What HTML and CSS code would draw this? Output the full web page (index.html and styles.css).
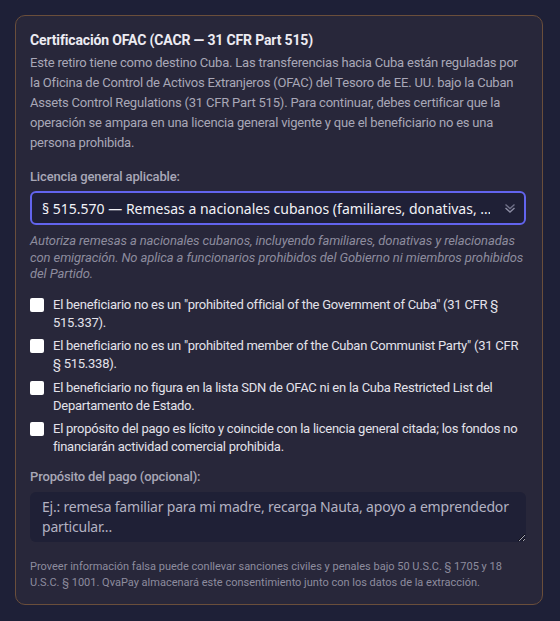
FILE: index.html
```html
<!DOCTYPE html>
<html lang="es">
<head>
    <meta charset="UTF-8">
    <meta name="viewport" content="width=device-width, initial-scale=1.0">
    <title>Certificación OFAC</title>
    <link rel="stylesheet" href="styles.css">
</head>
<body>
    <section class="ofac-card">
        <h2 class="ofac-title">Certificación OFAC (CACR — 31 CFR Part 515)</h2>
        <p class="ofac-intro">Este retiro tiene como destino Cuba. Las transferencias hacia Cuba están reguladas por la Oficina de Control de Activos Extranjeros (OFAC) del Tesoro de EE. UU. bajo la Cuban Assets Control Regulations (31 CFR Part 515). Para continuar, debes certificar que la operación se ampara en una licencia general vigente y que el beneficiario no es una persona prohibida.</p>

        <div class="field">
            <label class="field-label" for="license">Licencia general aplicable:</label>
            <div class="select-wrap">
                <select id="license" class="license-select">
                    <option>§ 515.570 — Remesas a nacionales cubanos (familiares, donativas, …</option>
                </select>
                <svg class="select-chevron" width="12" height="11" viewBox="0 0 12 11" fill="none">
                    <polyline points="1.5,1.5 6,5.5 10.5,1.5" stroke="#6f7088" stroke-width="1.4"/>
                    <polyline points="1.5,5 6,9 10.5,5" stroke="#8a8ba2" stroke-width="1.4"/>
                </svg>
            </div>
            <p class="field-help">Autoriza remesas a nacionales cubanos, incluyendo familiares, donativas y relacionadas con emigración. No aplica a funcionarios prohibidos del Gobierno ni miembros prohibidos del Partido.</p>
        </div>

        <div class="checks">
            <label class="check-row">
                <input type="checkbox" class="check-box">
                <span>El beneficiario no es un "prohibited official of the Government of Cuba" (31 CFR § 515.337).</span>
            </label>
            <label class="check-row">
                <input type="checkbox" class="check-box">
                <span>El beneficiario no es un "prohibited member of the Cuban Communist Party" (31 CFR § 515.338).</span>
            </label>
            <label class="check-row">
                <input type="checkbox" class="check-box">
                <span>El beneficiario no figura en la lista SDN de OFAC ni en la Cuba Restricted List del Departamento de Estado.</span>
            </label>
            <label class="check-row">
                <input type="checkbox" class="check-box">
                <span>El propósito del pago es lícito y coincide con la licencia general citada; los fondos no financiarán actividad comercial prohibida.</span>
            </label>
        </div>

        <div class="field field-purpose">
            <label class="field-label" for="purpose">Propósito del pago (opcional):</label>
            <textarea id="purpose" class="purpose-input" rows="2" placeholder="Ej.: remesa familiar para mi madre, recarga Nauta, apoyo a emprendedor particular..."></textarea>
        </div>

        <p class="legal-note">Proveer información falsa puede conllevar sanciones civiles y penales bajo 50 U.S.C. § 1705 y 18 U.S.C. § 1001. QvaPay almacenará este consentimiento junto con los datos de la extracción.</p>
    </section>
</body>
</html>
```

FILE: styles.css
```css
:root {
    --page-bg: #1e2037;
    --card-bg: #28273a;
    --card-border: #6a4e3b;
    --input-bg: #1f2036;
    --accent: #6264ee;
    --text-main: #ecebf2;
    --text-soft: #a8a7b7;
    --text-muted: #8d8c9e;
}

* {
    margin: 0;
    padding: 0;
    box-sizing: border-box;
}

body {
    background: var(--page-bg);
    font-family: 'Roboto', 'Liberation Sans', sans-serif;
    color: var(--text-main);
    padding: 15px 17px 15px 15px;
}

.ofac-card {
    background: var(--card-bg);
    border: 1px solid var(--card-border);
    border-radius: 10px;
    padding: 15px 16px 14px 14px;
}

.ofac-title {
    font-size: 14px;
    font-weight: 700;
    line-height: 18px;
    letter-spacing: -0.15px;
    color: var(--text-main);
    margin-bottom: 4px;
}

.ofac-intro {
    font-size: 13px;
    line-height: 20px;
    letter-spacing: -0.2px;
    color: var(--text-soft);
}

.field {
    display: flex;
    flex-direction: column;
    margin-top: 15px;
}

.field-purpose {
    margin-top: 12px;
}

.field-label {
    font-size: 13px;
    font-weight: 500;
    line-height: 18px;
    letter-spacing: -0.15px;
    color: var(--text-soft);
    margin-bottom: 5px;
}

.field-purpose .field-label {
    margin-bottom: 6px;
}

.select-wrap {
    position: relative;
}

.license-select {
    appearance: none;
    width: 100%;
    height: 34px;
    padding: 0 34px 0 10px;
    background: var(--input-bg);
    border: 2px solid var(--accent);
    border-radius: 6px;
    color: #f2f2f7;
    font-family: 'Noto Sans', 'Open Sans', sans-serif;
    font-size: 14px;
    outline: none;
}

.select-chevron {
    position: absolute;
    right: 10px;
    top: 12px;
    pointer-events: none;
}

.field-help {
    margin-top: 8px;
    font-size: 13px;
    font-style: italic;
    line-height: 16.5px;
    letter-spacing: -0.1px;
    color: var(--text-muted);
}

.checks {
    display: flex;
    flex-direction: column;
    gap: 5.5px;
    margin-top: 13px;
}

.check-row {
    display: flex;
    align-items: flex-start;
    gap: 9px;
    font-size: 13px;
    line-height: 18px;
    letter-spacing: -0.25px;
    color: #e3e2ea;
    cursor: pointer;
}

.check-box {
    appearance: none;
    flex-shrink: 0;
    width: 14px;
    height: 14px;
    margin-top: 2px;
    background: #ffffff;
    border-radius: 2px;
}

.purpose-input {
    width: 100%;
    height: 50px;
    padding: 5px 12px;
    background: var(--input-bg);
    border: none;
    border-radius: 6px;
    color: #f2f2f7;
    font-family: 'Noto Sans', 'Open Sans', sans-serif;
    font-size: 14px;
    line-height: 19.5px;
    letter-spacing: -0.2px;
    resize: vertical;
    outline: none;
}

.purpose-input::placeholder {
    color: #b3b2c2;
}

.legal-note {
    margin-top: 17px;
    font-size: 11px;
    line-height: 15.5px;
    color: var(--text-muted);
}
```
